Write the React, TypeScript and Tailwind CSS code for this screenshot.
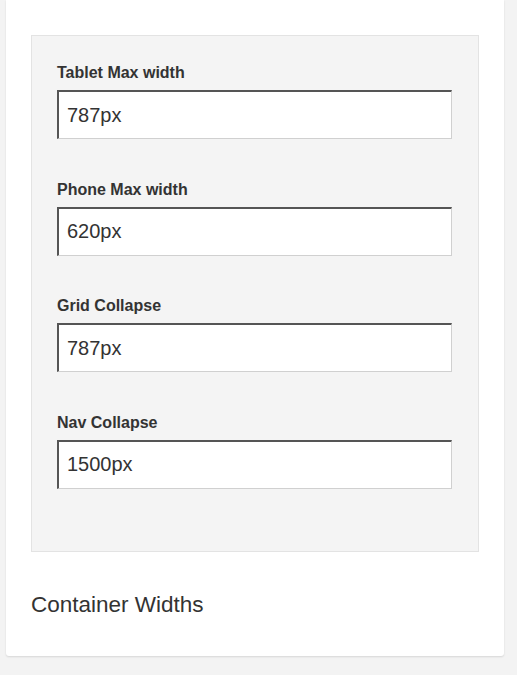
const fields = [
  { label: "Tablet Max width", value: "787px" },
  { label: "Phone Max width", value: "620px" },
  { label: "Grid Collapse", value: "787px" },
  { label: "Nav Collapse", value: "1500px" },
];

export default function App() {
  return (
    <div className="min-h-[675px] bg-[#f3f3f3] pl-[6px] font-['Liberation_Sans',Arial,sans-serif] text-[#333]">
      <div className="w-[498px] bg-white rounded-b-[3px] shadow-[0_1px_2px_rgba(0,0,0,0.12)] pl-[25px] pt-[35px] pb-[38px]">
        <div className="w-[448px] bg-[#f4f4f4] border border-[#e3e3e3] pl-[25px] pt-[27px] pb-[62px] flex flex-col gap-[40.5px]">
          {fields.map((f) => (
            <div key={f.label} className="flex flex-col">
              <label className="text-[16px] font-bold leading-[19px] mb-[8px]">{f.label}</label>
              <input
                readOnly
                value={f.value}
                className="w-[395px] h-[49px] bg-white border-2 border-t-[#555] border-l-[#555] border-r-[#d0d0d0] border-b-[#d0d0d0] border-r-1 border-b-1 pl-[8px] text-[20px] text-[#333] outline-none"
              />
            </div>
          ))}
        </div>
        <h2 className="mt-[40px] text-[22.5px] leading-[26px] text-[#333]">Container Widths</h2>
      </div>
    </div>
  );
}
